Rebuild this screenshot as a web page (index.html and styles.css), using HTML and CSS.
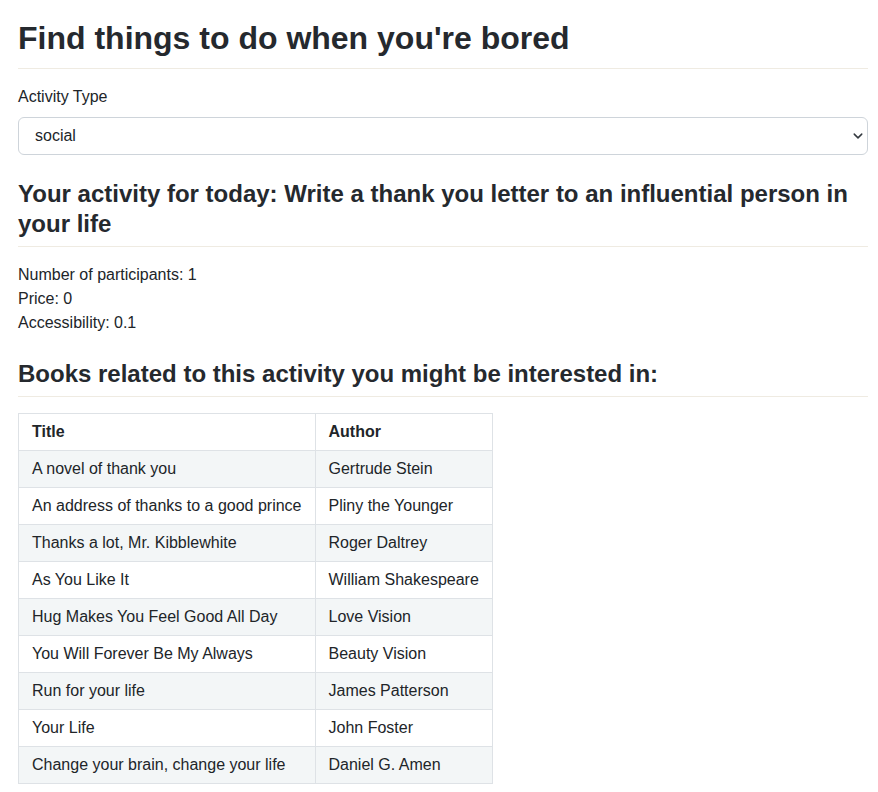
FILE: index.html
```html
<!DOCTYPE html>
<html lang="en">
<head>
<meta charset="utf-8">
<title>Bored</title>
<link rel="stylesheet" href="styles.css">
</head>
<body>
<main class="page">
  <h1 class="title">Find things to do when you're bored</h1>
  <hr class="rule">
  <label class="label" for="type">Activity Type</label>
  <div class="select-wrap">
    <select id="type" class="select">
      <option>social</option>
    </select>
    <svg class="chevron" width="12" height="10" viewBox="0 0 16 16" aria-hidden="true"><path fill="none" stroke="#343a40" stroke-linecap="round" stroke-linejoin="round" stroke-width="2.4" d="M2 5l6 6 6-6"/></svg>
  </div>
  <h3 class="subtitle">Your activity for today: Write a thank you letter to an influential person in your life</h3>
  <hr class="rule rule-tight">
  <div class="details">
    <div>Number of participants: 1</div>
    <div>Price: 0</div>
    <div>Accessibility: 0.1</div>
  </div>
  <h3 class="subtitle books">Books related to this activity you might be interested in:</h3>
  <hr class="rule rule-tight">
  <table class="table">
    <thead>
      <tr><th>Title</th><th>Author</th></tr>
    </thead>
    <tbody>
      <tr><td>A novel of thank you</td><td>Gertrude Stein</td></tr>
      <tr><td>An address of thanks to a good prince</td><td>Pliny the Younger</td></tr>
      <tr><td>Thanks a lot, Mr. Kibblewhite</td><td>Roger Daltrey</td></tr>
      <tr><td>As You Like It</td><td>William Shakespeare</td></tr>
      <tr><td>Hug Makes You Feel Good All Day</td><td>Love Vision</td></tr>
      <tr><td>You Will Forever Be My Always</td><td>Beauty Vision</td></tr>
      <tr><td>Run for your life</td><td>James Patterson</td></tr>
      <tr><td>Your Life</td><td>John Foster</td></tr>
      <tr><td>Change your brain, change your life</td><td>Daniel G. Amen</td></tr>
    </tbody>
  </table>
</main>
</body>
</html>
```

FILE: styles.css
```css
* { box-sizing: border-box; }
html, body { margin: 0; padding: 0; background: #fff; }
body {
  font-family: "Liberation Sans", Arial, sans-serif;
  font-size: 16px;
  line-height: 24px;
  color: #212529;
}
.page {
  padding: 16px 10px 0 18px;
}
.title {
  margin: 0;
  font-size: 32px;
  line-height: 44px;
  font-weight: 700;
  color: #25292e;
}
.rule {
  margin: 8px 0 16px;
  border: 0;
  border-top: 1px solid #efebe2;
  height: 0;
}
.rule-tight {
  margin-top: 7px;
}
.label {
  display: block;
  margin-bottom: 8px;
}
.select-wrap {
  position: relative;
}
.select {
  display: block;
  width: 100%;
  height: 38px;
  padding: 6px 36px 6px 16px;
  font-family: inherit;
  font-size: 16px;
  line-height: 24px;
  color: #212529;
  background: #fff;
  border: 1px solid #ced4da;
  border-radius: 6px;
  -webkit-appearance: none;
  appearance: none;
}
.chevron {
  position: absolute;
  right: 4px;
  top: 14px;
  pointer-events: none;
}
.subtitle {
  margin: 24px 0 0;
  font-size: 24px;
  line-height: 30px;
  font-weight: 700;
  color: #25292e;
}
.subtitle.books {
  margin-top: 24px;
}
.table {
  border-collapse: collapse;
  border: 1px solid #dee2e6;
}
.table th, .table td {
  border: 1px solid #dee2e6;
  padding: 6px 13px;
  text-align: left;
  height: 37px;
}
.table th { font-weight: 700; }
.table tbody tr:nth-child(odd) td { background: #f3f6f7; }
```
